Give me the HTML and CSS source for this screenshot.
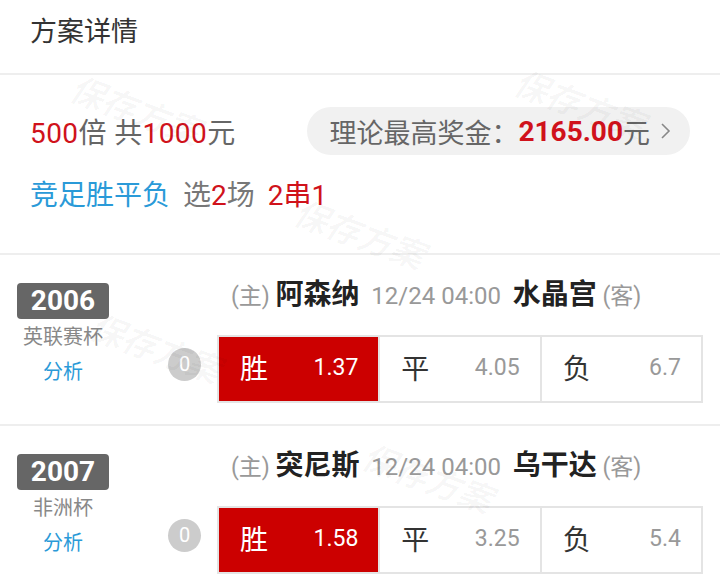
FILE: index.html
```html
<!DOCTYPE html>
<html lang="zh-CN">
<head>
    <meta charset="UTF-8">
    <title>方案详情</title>
    <link rel="stylesheet" href="styles.css">
</head>
<body>

<div class="page">
    <div class="title">方案详情</div>

    <div class="summary">
        <div class="row1">
            <div class="times"><span class="red">500</span>倍 共<span class="red">1000</span>元</div>
            <div class="prize">
                理论最高奖金：<b class="red">2165.00</b>元
                <svg class="chev" width="12" height="18" viewBox="0 0 12 18"><polyline points="2,2 9,9 2,16" fill="none" stroke="#888" stroke-width="1.6"/></svg>
            </div>
        </div>
        <div class="row2">
            <span class="blue">竞足胜平负</span>
            <span class="pick">选<span class="red">2</span>场</span>
            <span class="red">2串1</span>
        </div>
    </div>

    <div class="match">
        <div class="league">
            <div class="num">2006</div>
            <div class="lname">英联赛杯</div>
            <div class="ana">分析</div>
        </div>
        <div class="main">
            <div class="head">
                <span class="side">(主)</span> <b>阿森纳</b> <span class="time">12/24 04:00</span> <b>水晶宫</b> <span class="side">(客)</span>
            </div>
            <div class="odds-row">
                <div class="dot">0</div>
                <div class="odds">
                    <div class="cell on"><span class="k">胜</span><span class="v">1.37</span></div>
                    <div class="cell"><span class="k">平</span><span class="v">4.05</span></div>
                    <div class="cell"><span class="k">负</span><span class="v">6.7</span></div>
                </div>
            </div>
        </div>
    </div>

    <div class="match">
        <div class="league">
            <div class="num">2007</div>
            <div class="lname">非洲杯</div>
            <div class="ana">分析</div>
        </div>
        <div class="main">
            <div class="head">
                <span class="side">(主)</span> <b>突尼斯</b> <span class="time">12/24 04:00</span> <b>乌干达</b> <span class="side">(客)</span>
            </div>
            <div class="odds-row">
                <div class="dot">0</div>
                <div class="odds">
                    <div class="cell on"><span class="k">胜</span><span class="v">1.58</span></div>
                    <div class="cell"><span class="k">平</span><span class="v">3.25</span></div>
                    <div class="cell"><span class="k">负</span><span class="v">5.4</span></div>
                </div>
            </div>
        </div>
    </div>

    <!-- watermark -->
    <div class="wm" style="left:68px;top:84px">保存方案</div>
    <div class="wm" style="left:512px;top:78px">保存方案</div>
    <div class="wm" style="left:292px;top:208px">保存方案</div>
    <div class="wm" style="left:88px;top:322px">保存方案</div>
    <div class="wm" style="left:360px;top:452px">保存方案</div>
</div>

</body>
</html>
```

FILE: styles.css
```css
body {
    margin: 0;
    background: #fff;
    font-family: Roboto, "Noto Sans CJK SC", sans-serif;
    color: #333;
}
.page {
    position: relative;
    width: 720px;
    height: 584px;
    overflow: hidden;
}
.red { color: #d0121b; }
.blue { color: #2a9ad8; }

.title {
    height: 73px;
    line-height: 64px;
    padding-left: 30px;
    font-size: 27px;
    color: #333;
    border-bottom: 2px solid #eee;
}

.summary {
    padding: 32px 30px 42px 30px;
    border-bottom: 2px solid #eee;
}
.row1 {
    display: flex;
    justify-content: space-between;
    align-items: center;
    height: 48px;
}
.times { font-size: 28px; color: #666; letter-spacing: 0.4px; }
.prize {
    display: flex;
    align-items: center;
    height: 48px;
    padding: 0 18px 0 22px;
    border-radius: 24px;
    background: #f1f1f1;
    font-size: 27px;
    color: #666;
}
.prize b { font-weight: bold; font-size: 28px; }
.chev { margin-left: 10px; }
.row2 {
    margin-top: 26px;
    line-height: 30px;
    font-size: 28px;
}
.pick { color: #777; margin: 0 6px 0 6px; }

.match {
    display: flex;
    padding: 28px 17px 21px 17px;
    border-bottom: 2px solid #eee;
}
.league {
    width: 92px;
    display: flex;
    flex-direction: column;
    align-items: center;
}
.num {
    width: 92px;
    height: 36px;
    line-height: 36px;
    text-align: center;
    background: #666;
    color: #fff;
    font-weight: bold;
    font-size: 28px;
    border-radius: 4px;
}
.lname {
    margin-top: 5px;
    line-height: 26px;
    font-size: 20px;
    color: #888;
}
.ana {
    margin-top: 9px;
    line-height: 26px;
    font-size: 20px;
    color: #2a9ad8;
}
.main {
    flex: 1;
    margin-left: 59px;
}
.head {
    padding-left: 63px;
    line-height: 24px;
    font-size: 23px;
    color: #999;
    white-space: nowrap;
}
.head b { color: #222; font-size: 28px; font-weight: bold; }
.time { margin: 0 6px; font-size: 24px; }
.odds-row {
    display: flex;
    align-items: center;
    margin-top: 26px;
}
.dot {
    width: 33px;
    height: 33px;
    line-height: 33px;
    margin: -10px 16px 0 0;
    border-radius: 50%;
    background: #ccc;
    color: #fff;
    text-align: center;
    font-size: 20px;
}
.odds {
    flex: 1;
    display: flex;
    height: 64px;
    border: 2px solid #e4e4e4;
}
.cell {
    flex: 1;
    display: flex;
    justify-content: space-between;
    align-items: center;
    padding: 0 20px 4px 21px;
    border-left: 2px solid #e4e4e4;
}
.cell:first-child { border-left: none; }
.cell.on { background: #cc0000; }
.k { font-size: 28px; color: #333; }
.v { font-size: 23px; color: #999; }
.on .k, .on .v { color: #fff; }

.wm {
    position: absolute;
    transform: rotate(20deg);
    font-size: 34px;
    font-weight: bold;
    font-style: italic;
    color: rgba(0, 0, 0, 0.03);
    white-space: nowrap;
    pointer-events: none;
}
```
